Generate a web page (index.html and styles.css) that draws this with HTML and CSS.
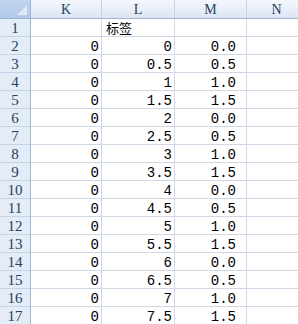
FILE: index.html
```html
<!DOCTYPE html>
<html>
<head>
<meta charset="utf-8">
<link rel="stylesheet" href="styles.css">
</head>
<body>
<div class="sheet">
  <div class="corner"><span class="tri"></span></div>
  <div class="colhead">K</div>
  <div class="colhead">L</div>
  <div class="colhead">M</div>
  <div class="colhead">N</div>

  <div class="rowhead">1</div><div class="cell"></div><div class="cell txt">标签</div><div class="cell"></div><div class="cell"></div>
  <div class="rowhead">2</div><div class="cell num">0</div><div class="cell num">0</div><div class="cell num m">0.0</div><div class="cell"></div>
  <div class="rowhead">3</div><div class="cell num">0</div><div class="cell num">0.5</div><div class="cell num m">0.5</div><div class="cell"></div>
  <div class="rowhead">4</div><div class="cell num">0</div><div class="cell num">1</div><div class="cell num m">1.0</div><div class="cell"></div>
  <div class="rowhead">5</div><div class="cell num">0</div><div class="cell num">1.5</div><div class="cell num m">1.5</div><div class="cell"></div>
  <div class="rowhead">6</div><div class="cell num">0</div><div class="cell num">2</div><div class="cell num m">0.0</div><div class="cell"></div>
  <div class="rowhead">7</div><div class="cell num">0</div><div class="cell num">2.5</div><div class="cell num m">0.5</div><div class="cell"></div>
  <div class="rowhead">8</div><div class="cell num">0</div><div class="cell num">3</div><div class="cell num m">1.0</div><div class="cell"></div>
  <div class="rowhead">9</div><div class="cell num">0</div><div class="cell num">3.5</div><div class="cell num m">1.5</div><div class="cell"></div>
  <div class="rowhead">10</div><div class="cell num">0</div><div class="cell num">4</div><div class="cell num m">0.0</div><div class="cell"></div>
  <div class="rowhead">11</div><div class="cell num">0</div><div class="cell num">4.5</div><div class="cell num m">0.5</div><div class="cell"></div>
  <div class="rowhead">12</div><div class="cell num">0</div><div class="cell num">5</div><div class="cell num m">1.0</div><div class="cell"></div>
  <div class="rowhead">13</div><div class="cell num">0</div><div class="cell num">5.5</div><div class="cell num m">1.5</div><div class="cell"></div>
  <div class="rowhead">14</div><div class="cell num">0</div><div class="cell num">6</div><div class="cell num m">0.0</div><div class="cell"></div>
  <div class="rowhead">15</div><div class="cell num">0</div><div class="cell num">6.5</div><div class="cell num m">0.5</div><div class="cell"></div>
  <div class="rowhead">16</div><div class="cell num">0</div><div class="cell num">7</div><div class="cell num m">1.0</div><div class="cell"></div>
  <div class="rowhead">17</div><div class="cell num">0</div><div class="cell num">7.5</div><div class="cell num m">1.5</div><div class="cell"></div>
</div>
</body>
</html>
```
FILE: styles.css
```css
html, body {
  margin: 0;
  padding: 0;
  background: #ffffff;
  overflow: hidden;
}
.sheet {
  display: grid;
  grid-template-columns: 31px 71px 73px 72px 60px;
  grid-template-rows: 19px repeat(17, 18px);
  width: 307px;
  font-family: "Liberation Mono", "DejaVu Sans Mono", monospace;
  font-size: 14px;
  color: #000;
}
.sheet > div {
  box-sizing: border-box;
  border-right: 1px solid #d0d7e5;
  border-bottom: 1px solid #d0d7e5;
  line-height: 13px;
  white-space: nowrap;
}
.corner {
  position: relative;
  background: linear-gradient(#c3d5ee, #b1c8e8);
  border-right-color: #9eb6ce !important;
  border-bottom-color: #9eb6ce !important;
}
.tri {
  position: absolute;
  right: 3px;
  bottom: 3px;
  width: 0;
  height: 0;
  border-left: 10px solid transparent;
  border-bottom: 10px solid #dfe8f5;
}
.colhead {
  background: linear-gradient(#f4f7fc 0%, #e9eff8 50%, #dbe5f2 100%);
  border-right-color: #c5d3e6 !important;
  border-bottom-color: #9eb6ce !important;
  text-align: center;
  color: #27415f;
  font-family: "Liberation Serif", serif;
  font-size: 14px;
  line-height: 18px !important;
  padding-top: 1px;
}
.rowhead {
  background: #e4ecf7;
  border-right-color: #9eb6ce !important;
  border-bottom-color: #c5d3e6 !important;
  color: #27415f;
  text-align: center;
  padding-top: 3px;
  font-family: "Liberation Serif", serif;
  font-size: 15px;
}
.cell {
  padding-top: 4px;
}
.num {
  text-align: right;
  padding-right: 2px;
}
.num.m {
  padding-right: 10px;
}
.txt {
  font-family: "Noto Sans CJK SC", sans-serif;
  font-size: 13px;
  padding-left: 4px;
  padding-top: 1px;
  line-height: 16px !important;
}
```
